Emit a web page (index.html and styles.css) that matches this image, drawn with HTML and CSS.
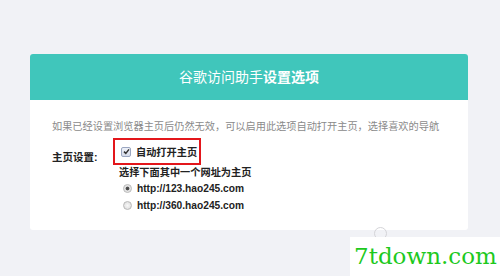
FILE: index.html
```html
<!DOCTYPE html>
<html lang="zh-CN">
<head>
    <meta charset="UTF-8" />
    <meta name="viewport" content="width=device-width, initial-scale=1.0" />
    <title>谷歌访问助手设置选项</title>
    <link rel="stylesheet" href="styles.css">
</head>
<body>
    <div class="card">
        <div class="card-head">谷歌访问助手<b>设置选项</b></div>
        <div class="card-body">
            <p class="desc">如果已经设置浏览器主页后仍然无效，可以启用此选项自动打开主页，选择喜欢的导航</p>
            <div class="form-row">
                <span class="label">主页设置:</span>
                <div class="options">
                    <label class="check-box">
                        <span class="check"><svg width="7" height="7" viewBox="0 0 7 7"><path d="M1 3.6 L2.8 5.4 L6 1.4" fill="none" stroke="#333" stroke-width="1.5"/></svg></span>
                        自动打开主页
                    </label>
                    <p class="sub">选择下面其中一个网址为主页</p>
                    <label class="radio-row"><span class="radio on"></span>http://123.hao245.com</label>
                    <label class="radio-row"><span class="radio"></span>http://360.hao245.com</label>
                </div>
            </div>
        </div>
    </div>
    <span class="peek"></span>
    <div class="watermark">7tdown.com</div>
</body>
</html>
```

FILE: styles.css
```css
body {
    margin: 0;
    padding: 0;
    height: 276px;
    overflow: hidden;
    background: #f1f2f6;
    font-family: "Liberation Sans", "Noto Sans CJK SC", sans-serif;
    color: #222;
}
p {
    margin: 0;
}
.card {
    margin: 54px 32px 0 30px;
    height: 176px;
    background: #fff;
    border-radius: 3px;
    overflow: hidden;
}
.card-head {
    height: 46px;
    line-height: 46px;
    background: #40c6bb;
    color: #fff;
    text-align: center;
    font-size: 14px;
}
.card-body {
    padding: 20px 22px 0 22px;
}
.desc {
    font-size: 10.2px;
    line-height: 14px;
    color: #8a8a8a;
    white-space: nowrap;
}
.form-row {
    display: flex;
    margin-top: 4px;
}
.label {
    flex: none;
    width: 61px;
    font-size: 10.5px;
    font-weight: bold;
    line-height: 15px;
    margin-top: 12px;
}
.options {
    display: flex;
    flex-direction: column;
    align-items: flex-start;
}
.check-box {
    display: flex;
    align-items: center;
    gap: 5px;
    border: 2px solid #e3161b;
    padding: 0 2px 0 6px;
    height: 23px;
    font-size: 10.2px;
    font-weight: bold;
}
.check {
    width: 8px;
    height: 8px;
    border: 1px solid #9aa6c0;
    border-radius: 2px;
    background: linear-gradient(#eef1f8, #d6dcea);
    display: flex;
    align-items: center;
    justify-content: center;
}
.sub {
    font-size: 10.2px;
    font-weight: bold;
    line-height: 14px;
    margin: 1px 0 0 6px;
    white-space: nowrap;
}
.radio-row {
    display: flex;
    align-items: center;
    gap: 5px;
    margin-left: 10px;
    height: 17px;
    font-size: 10.2px;
    font-weight: bold;
}
.radio-row:first-of-type {
    margin-top: 3px;
}
.radio {
    width: 7px;
    height: 7px;
    border: 1px solid #b8b8b8;
    border-radius: 50%;
    background: radial-gradient(circle, #f8f8f8, #d8d8d8);
}
.radio.on {
    background: radial-gradient(circle, #444 0, #555 1.6px, #dcdcdc 2.2px, #eee 4px);
}
.peek {
    position: absolute;
    left: 374px;
    top: 227px;
    width: 11px;
    height: 11px;
    border: 1px solid #d4d4d8;
    border-radius: 50%;
}
.watermark {
    position: absolute;
    left: 350px;
    top: 237px;
    right: 0;
    bottom: 0;
    background: #fff;
    color: #1dc91d;
    font-family: "DejaVu Serif", serif;
    font-size: 23px;
    line-height: 38px;
    padding-left: 4px;
}
```
